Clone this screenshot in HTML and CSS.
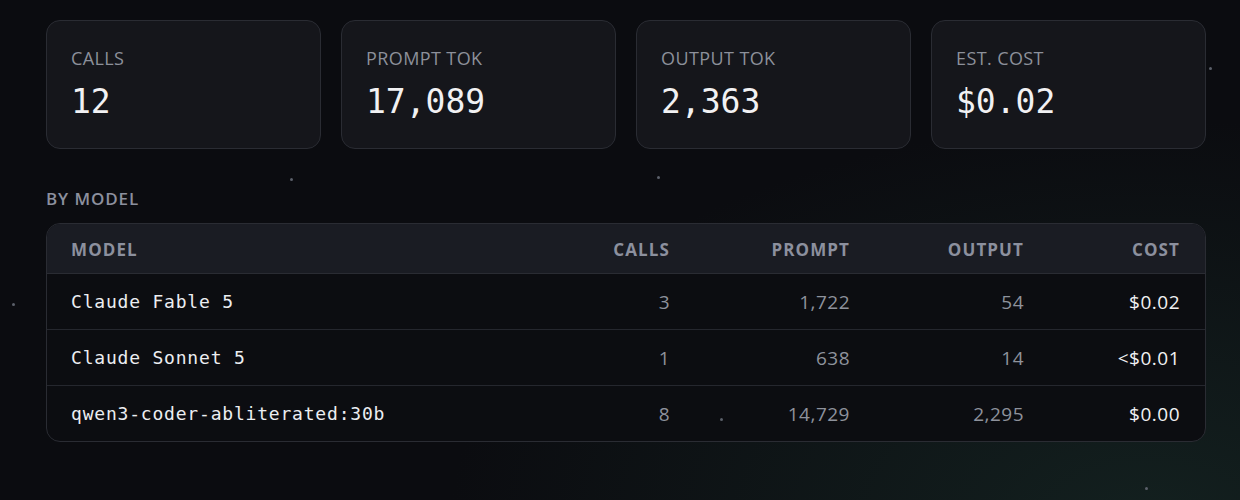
FILE: index.html
```html
<!DOCTYPE html>
<html lang="en">
<head>
    <meta charset="UTF-8">
    <meta name="viewport" content="width=device-width, initial-scale=1.0">
    <title>Usage</title>
    <link rel="stylesheet" href="styles.css">
</head>
<body>
    <div class="stars">
        <span class="star" style="left:1209px;top:67px"></span>
        <span class="star" style="left:657px;top:176px"></span>
        <span class="star" style="left:12px;top:303px"></span>
        <span class="star" style="left:1145px;top:487px"></span>
        <span class="star" style="left:720px;top:418px"></span>
        <span class="star" style="left:290px;top:178px"></span>
    </div>

    <main class="usage">
        <div class="stat-cards">
            <div class="stat-card">
                <div class="stat-label">CALLS</div>
                <div class="stat-value">12</div>
            </div>
            <div class="stat-card">
                <div class="stat-label">PROMPT TOK</div>
                <div class="stat-value">17,089</div>
            </div>
            <div class="stat-card">
                <div class="stat-label">OUTPUT TOK</div>
                <div class="stat-value">2,363</div>
            </div>
            <div class="stat-card">
                <div class="stat-label">EST. COST</div>
                <div class="stat-value">$0.02</div>
            </div>
        </div>

        <h3 class="section-title">BY MODEL</h3>
        <div class="table-wrap">
            <table class="model-table">
                <colgroup>
                    <col>
                    <col class="col-calls">
                    <col class="col-prompt">
                    <col class="col-output">
                    <col class="col-cost">
                </colgroup>
                <thead>
                    <tr>
                        <th class="left">MODEL</th>
                        <th>CALLS</th>
                        <th>PROMPT</th>
                        <th>OUTPUT</th>
                        <th>COST</th>
                    </tr>
                </thead>
                <tbody>
                    <tr>
                        <td class="model">Claude Fable 5</td>
                        <td>3</td>
                        <td>1,722</td>
                        <td>54</td>
                        <td class="cost">$0.02</td>
                    </tr>
                    <tr>
                        <td class="model">Claude Sonnet 5</td>
                        <td>1</td>
                        <td>638</td>
                        <td>14</td>
                        <td class="cost">&lt;$0.01</td>
                    </tr>
                    <tr>
                        <td class="model">qwen3-coder-abliterated:30b</td>
                        <td>8</td>
                        <td>14,729</td>
                        <td>2,295</td>
                        <td class="cost">$0.00</td>
                    </tr>
                </tbody>
            </table>
        </div>
    </main>
</body>
</html>
```

FILE: styles.css
```css
body {
    margin: 0;
    height: 500px;
    overflow: hidden;
    font-family: "Open Sans", "Noto Sans", sans-serif;
    color: #e6e7ea;
    background: radial-gradient(ellipse 700px 400px at 1150px 520px, #13201f 0%, rgba(19,32,31,0) 100%),
                #0b0c10;
}

.stars {
    position: fixed;
    inset: 0;
    pointer-events: none;
}

.star {
    position: absolute;
    width: 3px;
    height: 3px;
    border-radius: 50%;
    background-color: #5b606a;
}

.usage {
    padding: 20px 34px 0 46px;
}

.stat-cards {
    display: grid;
    grid-template-columns: repeat(4, 1fr);
    gap: 20px;
}

.stat-card {
    height: 129px;
    padding: 25px 24px 0;
    box-sizing: border-box;
    background-color: #15161b;
    border: 1px solid #2a2c33;
    border-radius: 14px;
}

.stat-label {
    font-size: 18px;
    color: #8c909a;
    letter-spacing: 0.4px;
    line-height: 24px;
}

.stat-value {
    margin-top: 12px;
    font-family: "DejaVu Sans Mono", monospace;
    font-size: 33px;
    line-height: 40px;
    color: #f1f1f3;
}

.section-title {
    margin: 39px 0 13px;
    font-size: 17px;
    font-weight: 600;
    letter-spacing: 0.9px;
    line-height: 22px;
    color: #8c909e;
}

.table-wrap {
    border: 1px solid #2a2c33;
    border-radius: 14px;
    overflow: hidden;
    background-color: #0c0d11;
}

.model-table {
    width: 100%;
    border-collapse: collapse;
    table-layout: fixed;
}

.col-calls { width: 150px; }
.col-prompt { width: 180px; }
.col-output { width: 174px; }
.col-cost { width: 156px; }

.model-table th {
    height: 48px;
    padding: 1px 25px 0 24px;
    text-align: right;
    font-size: 17px;
    font-weight: 700;
    letter-spacing: 1.1px;
    color: #8c909e;
    background-color: #1a1c23;
    border-bottom: 1px solid #2a2c33;
}

.model-table th.left {
    text-align: left;
}

.model-table td {
    height: 55px;
    padding: 0 25px 0 24px;
    text-align: right;
    font-size: 19px;
    letter-spacing: 0.5px;
    color: #8e929c;
    border-bottom: 1px solid #25272e;
}

.model-table tbody tr:last-child td {
    border-bottom: none;
}

.model-table td.model {
    text-align: left;
    font-family: "DejaVu Sans Mono", monospace;
    font-size: 18px;
    letter-spacing: 0.8px;
    color: #eceef1;
}

.model-table td.cost {
    color: #f1f1f3;
}
```
